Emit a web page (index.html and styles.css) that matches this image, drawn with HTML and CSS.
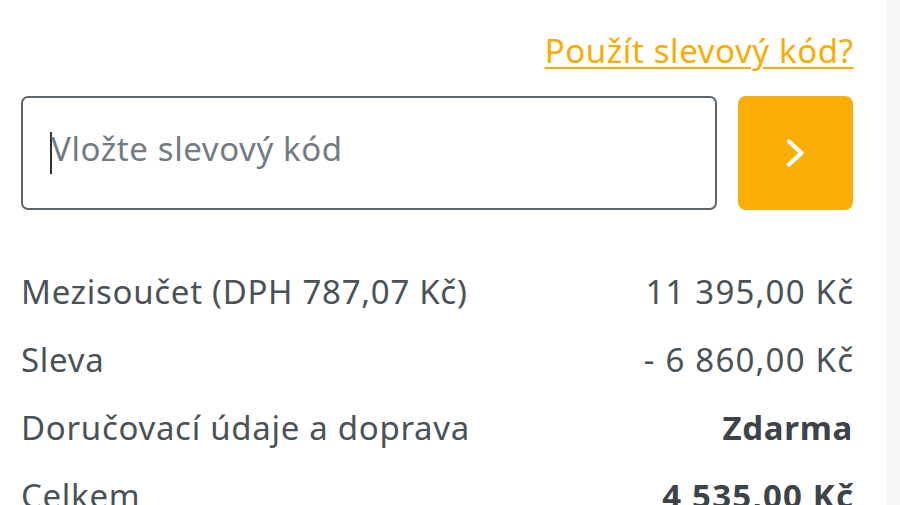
FILE: index.html
```html
<!DOCTYPE html>
<html lang="cs">
<head>
<meta charset="utf-8">
<title>Slevový kód</title>
<link rel="stylesheet" href="styles.css">
</head>
<body>
<main class="panel">
  <div class="promo">
    <a class="promo-link" href="#">Použít slevový kód?</a>
  </div>
  <form class="code-row">
    <div class="code-input">
      <span class="caret"></span>
      <span class="placeholder">Vložte slevový kód</span>
    </div>
    <button class="code-btn" type="button" aria-label="Použít">
      <svg width="22" height="30" viewBox="0 0 22 30" aria-hidden="true">
        <path d="M4 3.5 L16.5 15 L4 26.5" fill="none" stroke="#fff" stroke-width="4.4" stroke-linecap="round" stroke-linejoin="round"/>
      </svg>
    </button>
  </form>
  <div class="summary">
    <div class="row"><span>Mezisoučet (DPH 787,07 Kč)</span><span class="val">11 395,00 Kč</span></div>
    <div class="row"><span>Sleva</span><span class="val">- 6 860,00 Kč</span></div>
    <div class="row"><span>Doručovací údaje a doprava</span><span class="strong">Zdarma</span></div>
    <div class="row"><span>Celkem</span><span class="strong val">4 535,00 Kč</span></div>
  </div>
</main>
<aside class="side"></aside>
</body>
</html>
```
FILE: styles.css
```css
html, body {
  margin: 0;
  padding: 0;
  height: 100%;
  overflow: hidden;
}
body {
  display: flex;
  font-family: "Noto Sans", "DejaVu Sans", sans-serif;
  color: #4a5257;
  background: #fff;
}
.panel {
  width: 887px;
  flex: none;
  box-sizing: border-box;
  padding: 29px 34px 0 21px;
  background: #fff;
}
.side {
  flex: 1;
  background: #f6f6f6;
}
.promo {
  display: flex;
  justify-content: flex-end;
  height: 49px;
}
.promo-link {
  font-size: 33px;
  line-height: 44px;
  letter-spacing: 0.6px;
  color: #f8ac06;
  text-decoration: underline;
  text-decoration-thickness: 2px;
  text-underline-offset: 4px;
  margin-right: -0.6px;
}
.code-row {
  display: flex;
  gap: 21px;
  margin: 18px 0 0;
}
.code-input {
  flex: 1;
  height: 114px;
  box-sizing: border-box;
  border: 2px solid #5c666c;
  border-radius: 7px;
  display: flex;
  align-items: center;
  padding: 0 0 9px 27px;
  font-size: 33px;
  letter-spacing: 0.6px;
}
.caret {
  width: 2px;
  height: 42px;
  background: #333;
  margin: 9px -1px 0 0;
}
.placeholder {
  color: #737c83;
}
.code-btn {
  width: 115px;
  height: 114px;
  border: none;
  border-radius: 8px;
  background: #f9ae06;
  display: flex;
  align-items: center;
  justify-content: center;
  padding: 0;
}
.summary {
  margin-top: 48px;
}
.row {
  display: flex;
  justify-content: space-between;
  font-size: 33px;
  line-height: 68px;
  letter-spacing: 0.7px;
}
.val {
  letter-spacing: 1.2px;
  margin-right: -1.2px;
}
.strong {
  font-weight: 700;
  color: #3c4449;
}
```
